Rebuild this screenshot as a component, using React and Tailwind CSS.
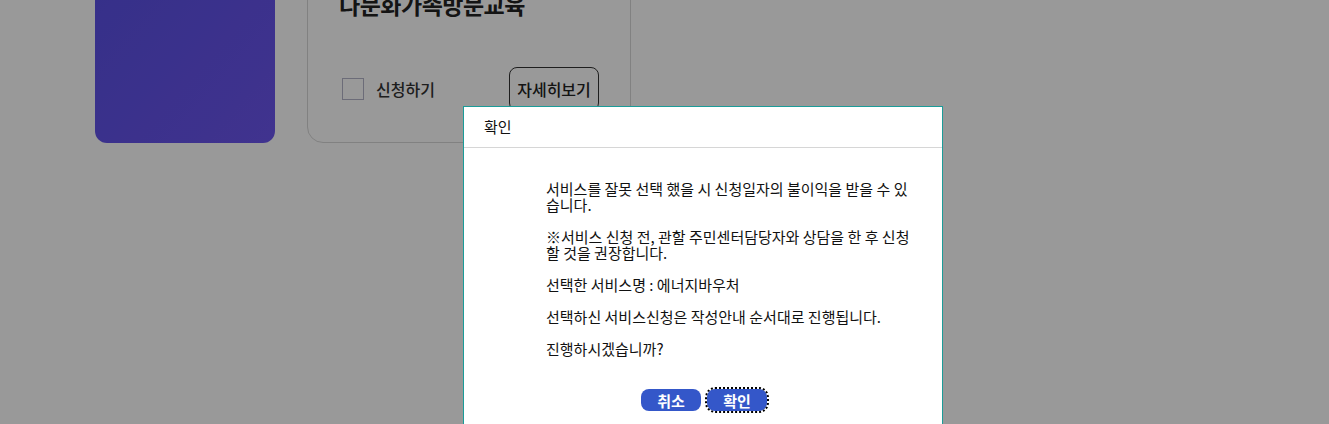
import React from "react";

const font = { fontFamily: '"Noto Sans CJK KR", "Noto Sans", sans-serif' };

const ServiceCard = ({ title }) => (
  <div className="w-[324px] h-[200px] rounded-2xl border border-[#d8d8d8] bg-white px-[31px] pt-[44px] flex flex-col">
    <h3 className="text-[23px] leading-[32px] font-bold text-[#222] tracking-[-0.5px]">{title}</h3>
    <div className="mt-auto mb-[31px] flex items-center justify-between">
      <label className="flex items-center gap-3 pl-[3px]">
        <span className="w-[22px] h-[22px] border border-[#b4b4c8] bg-white" />
        <span className="text-[16px] font-medium text-[#333]">신청하기</span>
      </label>
      <button className="w-[90px] h-[44px] rounded-lg border border-[#333] text-[16px] font-medium text-[#222]">
        자세히보기
      </button>
    </div>
  </div>
);

export default function App() {
  const messages = [
    "서비스를 잘못 선택 했을 시 신청일자의 불이익을 받을 수 있습니다.",
    "※서비스 신청 전, 관할 주민센터담당자와 상담을 한 후 신청할 것을 권장합니다.",
    "선택한 서비스명 : 에너지바우처",
    "선택하신 서비스신청은 작성안내 순서대로 진행됩니다.",
    "진행하시겠습니까?",
  ];

  return (
    <div className="relative w-[1329px] h-[424px] overflow-hidden bg-white" style={font}>
      {/* page content behind the dialog */}
      <div className="-mt-[57px] pl-[95px] flex gap-8">
        <div className="w-[180px] h-[200px] rounded-xl bg-gradient-to-br from-[#5850e4] to-[#6c55ee]" />
        <ServiceCard title="다문화가족방문교육" />
      </div>

      {/* dim overlay */}
      <div className="absolute inset-0 bg-black/40" />

      {/* confirm dialog */}
      <div className="absolute left-[463px] top-[106px] w-[480px] h-[340px] bg-white border border-[#1b9c99]">
        <div className="h-[41px] border-b border-[#d6d6d6] px-5 flex items-center">
          <span className="text-[15px] text-[#111]">확인</span>
        </div>
        <div className="pl-[82px] pr-[24px] pt-[33px] flex flex-col gap-4 text-[15px] leading-[16px] text-[#111]">
          {messages.map((m, i) => (
            <p key={i}>{m}</p>
          ))}
        </div>
        <div className="mt-[32px] flex justify-center gap-[6px] pl-[2px]">
          <button className="w-[60px] h-[22px] rounded-lg bg-[#3457c9] text-white text-[15px] font-bold leading-none">
            취소
          </button>
          <button className="w-[60px] h-[22px] rounded-lg bg-[#3457c9] text-white text-[15px] font-bold leading-none outline-2 outline-dotted outline-black">
            확인
          </button>
        </div>
      </div>
    </div>
  );
}
